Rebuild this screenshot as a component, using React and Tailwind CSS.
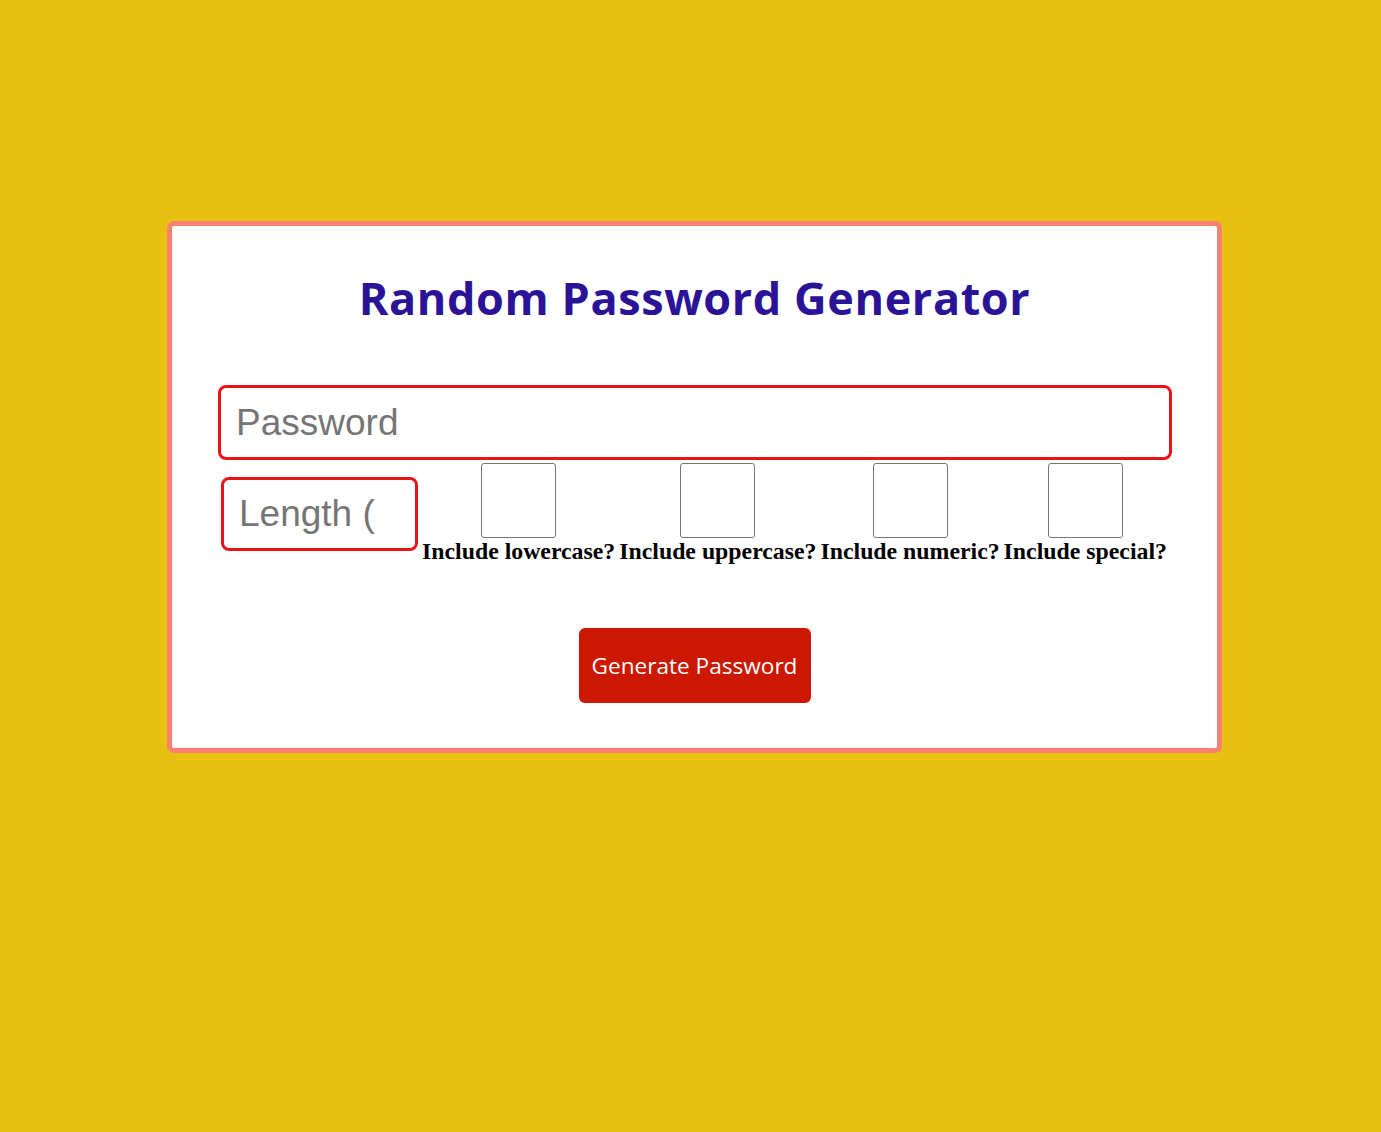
export default function App() {
    const options = [
        {id: "lowercase", label: "Include lowercase?"},
        {id: "uppercase", label: "Include uppercase?"},
        {id: "numeric", label: "Include numeric?"},
        {id: "special", label: "Include special?"},
    ];

    return (
        <div className="min-h-[1132px] w-full bg-[#e7c012] pt-[221px]">
            <div className="ml-[167px] w-[1055px] rounded-[7px] border-[5px] border-[#fa8072] bg-white px-[46px] pt-[39px] pb-[45px]">
                <h1 className="text-center font-['Open_Sans',sans-serif] text-[45px] font-bold leading-[66px] tracking-[0.6px] text-[#2a1396]">
                    Random Password Generator
                </h1>
                <input
                    type="text"
                    placeholder="Password"
                    className="mt-[54px] block h-[75px] w-[954px] rounded-[8px] border-[3px] border-[#e8141a] px-[15px] font-['Liberation_Sans',Arial,sans-serif] text-[37px] text-black placeholder:text-[#757575] outline-none"
                />
                <div className="mt-[3px] flex items-end gap-[4px]">
                    <input
                        type="text"
                        placeholder="Length ("
                        className="mb-[13px] ml-[3px] block h-[74px] w-[197px] shrink-0 rounded-[8px] border-[3px] border-[#e8141a] px-[15px] font-['Liberation_Sans',Arial,sans-serif] text-[37px] text-black placeholder:text-[#757575] outline-none"
                    />
                    {options.map(opt => (
                        <label key={opt.id} htmlFor={opt.id} className="flex shrink-0 flex-col items-center">
                            <input
                                id={opt.id}
                                type="checkbox"
                                className="h-[75px] w-[75px] appearance-none rounded-[3px] border border-[#767676] bg-white"
                            />
                            <span className="whitespace-nowrap font-['Liberation_Serif','Times_New_Roman',serif] text-[23.8px] font-bold leading-[26px] text-black">
                                {opt.label}
                            </span>
                        </label>
                    ))}
                </div>
                <div className="mt-[64px] flex justify-center">
                    <button
                        type="button"
                        className="h-[75px] w-[232px] rounded-[6px] bg-[#cc1800] font-['Open_Sans',sans-serif] text-[22.6px] font-medium text-white"
                    >
                        Generate Password
                    </button>
                </div>
            </div>
        </div>
    );
}
